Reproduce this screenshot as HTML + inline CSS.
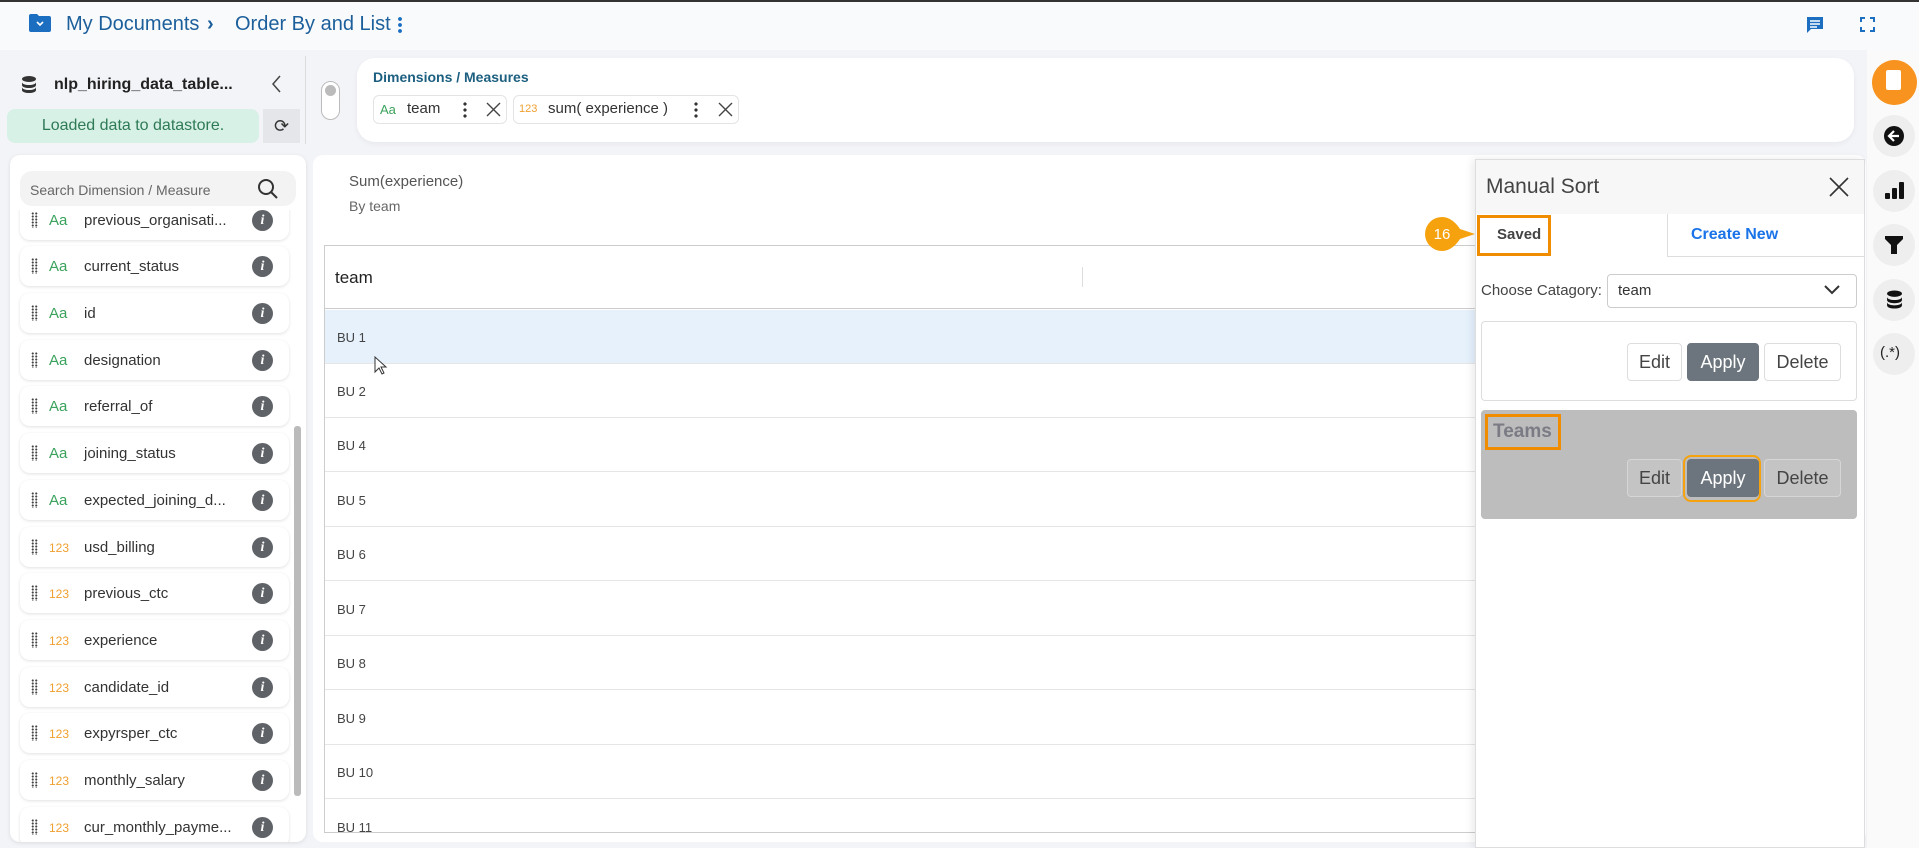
<!DOCTYPE html>
<html><head><meta charset="utf-8"><style>
*{box-sizing:border-box;margin:0;padding:0}
body{width:1919px;height:848px;overflow:hidden;background:#f3f4f8;font-family:"Liberation Sans",sans-serif;position:relative;color:#333}
.a{position:absolute}
.top{left:0;top:0;width:1919px;height:50px;background:#f9fafc;border-top:2px solid #333}
.bc{top:13px;font-size:20px;color:#1c5f9b}
.item{left:20px;width:269px;height:40px;background:#fff;border-radius:10px;box-shadow:0 1px 3px rgba(0,0,0,.12)}
.item .g{position:absolute;left:11px;top:12px;width:7px;height:16px;background:radial-gradient(circle,#444 0.9px,transparent 1.2px) 0 0/3.5px 3px}
.item .t{position:absolute;left:29px;top:12px;font-size:15px}
.item .n{position:absolute;left:64px;top:12px;font-size:15px;color:#333}
.item .i{position:absolute;left:232px;top:10px;width:21px;height:21px;border-radius:50%;background:#5f6368;color:#fff;font:italic bold 14px "Liberation Serif",serif;text-align:center;line-height:21px}
.aa{color:#3aa25c}.nn{color:#f0a030;font-size:12px!important;top:14px!important}
.row{left:325px;width:1150px;height:54px;border-bottom:1px solid #e6e6e6;font-size:13px;color:#444;padding:20px 0 0 12px}
.btn{height:38px;border:1px solid #ddd;border-radius:4px;background:#fff;font-size:18px;color:#444;text-align:center;line-height:36px}
.ap{background:#6c757d;color:#fff;border-color:#6c757d}
.sb{left:1873px;width:42px;height:42px;border-radius:50%;background:#eeeeef}
</style></head><body>
<div class="a top"></div>
<svg class="a" style="left:28px;top:13px" width="24" height="20" viewBox="0 0 24 20"><path d="M1 3a2 2 0 0 1 2-2h6l2 2h10a2 2 0 0 1 2 2v12a2 2 0 0 1-2 2H3a2 2 0 0 1-2-2z" fill="#1c6fc0"/><path d="M9 9l3 3 3-3" stroke="#fff" stroke-width="1.6" fill="none"/></svg>
<div class="a bc" style="left:66px">My Documents</div>
<div class="a bc" style="left:207px;font-weight:bold">›</div>
<div class="a bc" style="left:235px">Order By and List</div>
<div class="a" style="left:398px;top:16px;width:4px;height:18px;background:radial-gradient(circle,#1c6fc0 1.8px,transparent 2px) 0 0/4px 6px"></div>
<svg class="a" style="left:1805px;top:15px" width="20" height="20" viewBox="0 0 20 20"><path d="M2 2h16v12H6l-4 4z" fill="#1c6fc0"/><path d="M5 6h10M5 9h10M5 12h7" stroke="#fff" stroke-width="1.5"/></svg>
<svg class="a" style="left:1860px;top:17px" width="15" height="15" viewBox="0 0 15 15" fill="none" stroke="#1c6fc0" stroke-width="2"><path d="M1 5V1h4M10 1h4v4M14 10v4h-4M5 14H1v-4"/></svg>

<svg class="a" style="left:21px;top:75px" width="16" height="20" viewBox="0 0 16 20"><ellipse cx="8" cy="4" rx="7" ry="3" fill="#333"/><path d="M1 7c0 4 14 4 14 0v3c0 4-14 4-14 0zM1 12c0 4 14 4 14 0v3c0 4-14 4-14 0z" fill="#333"/></svg>
<div class="a" style="left:54px;top:76px;font-size:16px;font-weight:bold;color:#222">nlp_hiring_data_table...</div>
<svg class="a" style="left:272px;top:75px" width="10" height="18" viewBox="0 0 10 18" fill="none" stroke="#444" stroke-width="1.5"><path d="M8 1L1 9l7 8"/></svg>
<div class="a" style="left:7px;top:109px;width:252px;height:34px;background:#d7f1e6;border-radius:8px;color:#2e7a55;font-size:16px;text-align:center;line-height:34px">Loaded data to datastore.</div>
<div class="a" style="left:263px;top:109px;width:37px;height:34px;background:#e4e6ea;text-align:center;line-height:34px;font-size:18px">⟳</div>
<div class="a" style="left:305px;top:56px;width:1px;height:88px;background:#ddd"></div>
<div class="a" style="left:321px;top:81px;width:19px;height:39px;border:1px solid #bbb;border-radius:10px;background:#fff"></div>
<div class="a" style="left:325px;top:85px;width:11px;height:11px;border-radius:50%;background:#bbb"></div>
<div class="a" style="left:357px;top:58px;width:1497px;height:84px;background:#fff;border-radius:18px;box-shadow:0 2px 6px rgba(0,0,0,.05)"></div>
<div class="a" style="left:373px;top:69px;font-size:14px;font-weight:bold;color:#1c5f80">Dimensions / Measures</div>
<div class="a" style="left:373px;top:95px;width:134px;height:29px;border:1px solid #e4e4e4;border-radius:6px;background:#fff"></div>
<div class="a" style="left:380px;top:102px;font-size:13px;color:#3aa25c">Aa</div>
<div class="a" style="left:407px;top:100px;font-size:15px">team</div>
<div class="a" style="left:463px;top:101px;width:4px;height:17px;background:radial-gradient(circle,#333 1.6px,transparent 1.8px) 0 0/4px 6px"></div>
<svg class="a" style="left:486px;top:102px" width="15" height="15" viewBox="0 0 15 15" stroke="#444" stroke-width="1.4"><path d="M1 1l13 13M14 1L1 14"/></svg>
<div class="a" style="left:513px;top:95px;width:226px;height:29px;border:1px solid #e4e4e4;border-radius:6px;background:#fff"></div>
<div class="a" style="left:519px;top:103px;font-size:11px;color:#f0a030">123</div>
<div class="a" style="left:548px;top:100px;font-size:15px">sum( experience )</div>
<div class="a" style="left:694px;top:101px;width:4px;height:17px;background:radial-gradient(circle,#333 1.6px,transparent 1.8px) 0 0/4px 6px"></div>
<svg class="a" style="left:718px;top:102px" width="15" height="15" viewBox="0 0 15 15" stroke="#444" stroke-width="1.4"><path d="M1 1l13 13M14 1L1 14"/></svg>

<div class="a" style="left:10px;top:155px;width:296px;height:687px;background:#fff;border-radius:10px;box-shadow:0 1px 4px rgba(0,0,0,.1);overflow:hidden">
<div class="a" style="left:10px;top:16px;width:276px;height:35px;background:#f3f3f3;border-radius:12px"></div>
<div class="a" style="left:20px;top:27px;font-size:14px;color:#666">Search Dimension / Measure</div>
<svg class="a" style="left:247px;top:23px" width="22" height="22" viewBox="0 0 22 22" fill="none" stroke="#333" stroke-width="2"><circle cx="9" cy="9" r="7"/><path d="M14 14l6 6"/></svg>
</div>
<div class="a" style="left:10px;top:210px;width:290px;height:632px;overflow:hidden">
<div style="position:relative;left:-10px;top:-210px">
<div class="a item" style="top:200px"><div class="g"></div><div class="t aa">Aa</div><div class="n">previous_organisati...</div><div class="i">i</div></div>
<div class="a item" style="top:246px"><div class="g"></div><div class="t aa">Aa</div><div class="n">current_status</div><div class="i">i</div></div>
<div class="a item" style="top:293px"><div class="g"></div><div class="t aa">Aa</div><div class="n">id</div><div class="i">i</div></div>
<div class="a item" style="top:340px"><div class="g"></div><div class="t aa">Aa</div><div class="n">designation</div><div class="i">i</div></div>
<div class="a item" style="top:386px"><div class="g"></div><div class="t aa">Aa</div><div class="n">referral_of</div><div class="i">i</div></div>
<div class="a item" style="top:433px"><div class="g"></div><div class="t aa">Aa</div><div class="n">joining_status</div><div class="i">i</div></div>
<div class="a item" style="top:480px"><div class="g"></div><div class="t aa">Aa</div><div class="n">expected_joining_d...</div><div class="i">i</div></div>
<div class="a item" style="top:527px"><div class="g"></div><div class="t nn">123</div><div class="n">usd_billing</div><div class="i">i</div></div>
<div class="a item" style="top:573px"><div class="g"></div><div class="t nn">123</div><div class="n">previous_ctc</div><div class="i">i</div></div>
<div class="a item" style="top:620px"><div class="g"></div><div class="t nn">123</div><div class="n">experience</div><div class="i">i</div></div>
<div class="a item" style="top:667px"><div class="g"></div><div class="t nn">123</div><div class="n">candidate_id</div><div class="i">i</div></div>
<div class="a item" style="top:713px"><div class="g"></div><div class="t nn">123</div><div class="n">expyrsper_ctc</div><div class="i">i</div></div>
<div class="a item" style="top:760px"><div class="g"></div><div class="t nn">123</div><div class="n">monthly_salary</div><div class="i">i</div></div>
<div class="a item" style="top:807px"><div class="g"></div><div class="t nn">123</div><div class="n">cur_monthly_payme...</div><div class="i">i</div></div>
</div></div>
<div class="a" style="left:294px;top:426px;width:7px;height:370px;background:#bbb;border-radius:3px"></div>

<div class="a" style="left:313px;top:155px;width:1553px;height:687px;background:#fff;border-radius:10px"></div>
<div class="a" style="left:349px;top:173px;font-size:15px;color:#555">Sum(experience)</div>
<div class="a" style="left:349px;top:198px;font-size:14px;color:#666">By team</div>
<div class="a" style="left:324px;top:245px;width:1160px;height:588px;border:1px solid #ccc;border-right:none"></div>
<div class="a" style="left:325px;top:308px;width:1150px;height:1px;background:#ccc"></div>
<div class="a" style="left:335px;top:268px;font-size:17px;color:#222">team</div>
<div class="a" style="left:1082px;top:267px;width:1px;height:20px;background:#ddd"></div>
<div class="a row" style="top:310px;background:#e6f1fc">BU 1</div>
<div class="a row" style="top:364px">BU 2</div>
<div class="a row" style="top:418px">BU 4</div>
<div class="a row" style="top:473px">BU 5</div>
<div class="a row" style="top:527px">BU 6</div>
<div class="a row" style="top:582px">BU 7</div>
<div class="a row" style="top:636px">BU 8</div>
<div class="a row" style="top:691px">BU 9</div>
<div class="a row" style="top:745px">BU 10</div>
<div class="a row" style="top:800px;border:none;height:32px;overflow:hidden">BU 11</div>
<svg class="a" style="left:374px;top:356px" width="14" height="20" viewBox="0 0 14 20"><path d="M1 1v15l4-4 3 6 2-1-3-6h5z" fill="#fff" stroke="#333"/></svg>

<div class="a" style="left:1475px;top:159px;width:390px;height:689px;background:#fff;border:1px solid #ddd;box-shadow:-3px 0 8px rgba(0,0,0,.08)"></div>
<div class="a" style="left:1476px;top:160px;width:388px;height:54px;background:#f7f7f7"></div>
<div class="a" style="left:1486px;top:175px;font-size:21px;color:#444">Manual Sort</div>
<svg class="a" style="left:1829px;top:177px" width="20" height="20" viewBox="0 0 20 20" stroke="#333" stroke-width="1.6"><path d="M1 1l18 18M19 1L1 19"/></svg>
<div class="a" style="left:1667px;top:214px;width:197px;height:43px;border-left:1px solid #ddd;border-bottom:1px solid #ddd"></div>
<div class="a" style="left:1691px;top:226px;font-size:16px;font-weight:bold;color:#1a73e8">Create New</div>
<div class="a" style="left:1477px;top:215px;width:74px;height:41px;border:3px solid #f08c00"></div>
<div class="a" style="left:1497px;top:226px;font-size:15px;font-weight:bold;color:#444">Saved</div>
<svg class="a" style="left:1423px;top:216px" width="54" height="36" viewBox="0 0 54 36"><path d="M19 1a17 17 0 1 0 0 34c8 0 14-6 18-12l15-5-15-5C33 7 27 1 19 1z" fill="#f5a20e"/><text x="19" y="23" font-family="Liberation Sans" font-size="15" fill="#fff" text-anchor="middle">16</text></svg>
<div class="a" style="left:1481px;top:282px;font-size:15px;color:#444">Choose Catagory:</div>
<div class="a" style="left:1607px;top:274px;width:250px;height:34px;border:1px solid #ccc;border-radius:4px"></div>
<div class="a" style="left:1618px;top:282px;font-size:15px;color:#333">team</div>
<svg class="a" style="left:1824px;top:285px" width="16" height="10" viewBox="0 0 16 10" fill="none" stroke="#333" stroke-width="2"><path d="M1 1l7 7 7-7"/></svg>
<div class="a" style="left:1481px;top:321px;width:376px;height:80px;border:1px solid #ddd;border-radius:4px"></div>
<div class="a btn" style="left:1627px;top:343px;width:55px">Edit</div>
<div class="a btn ap" style="left:1687px;top:343px;width:72px">Apply</div>
<div class="a btn" style="left:1764px;top:343px;width:77px">Delete</div>
<div class="a" style="left:1481px;top:410px;width:376px;height:109px;background:#bdbdbd;border-radius:4px"></div>
<div class="a" style="left:1485px;top:414px;width:76px;height:36px;border:3px solid #f08c00"></div>
<div class="a" style="left:1493px;top:421px;font-size:19px;font-weight:bold;color:#7b7b85">Teams</div>
<div class="a btn" style="left:1627px;top:459px;width:55px;background:#c4c4c4;border-color:#d6d6d6">Edit</div>
<div class="a" style="left:1683px;top:455px;width:78px;height:47px;border:2px solid #f5a20e;border-radius:8px"></div>
<div class="a btn ap" style="left:1687px;top:459px;width:72px">Apply</div>
<div class="a btn" style="left:1764px;top:459px;width:77px;background:#c4c4c4;border-color:#d6d6d6">Delete</div>

<div class="a" style="left:1867px;top:50px;width:52px;height:798px;background:#fafafa"></div>
<div class="a" style="left:1872px;top:60px;width:45px;height:45px;border-radius:50%;background:#f7931e"></div>
<div class="a" style="left:1886px;top:70px;width:15px;height:20px;background:#fff;border-radius:2px"></div>
<div class="a sb" style="top:115px"></div>
<svg class="a" style="left:1883px;top:125px" width="22" height="22" viewBox="0 0 22 22"><circle cx="11" cy="11" r="10" fill="#111"/><path d="M16 11H7M11 6l-5 5 5 5" stroke="#fff" stroke-width="2.2" fill="none"/></svg>
<div class="a sb" style="top:170px"></div>
<svg class="a" style="left:1884px;top:181px" width="20" height="20" viewBox="0 0 20 20" fill="#111"><rect x="1" y="12" width="5" height="6" rx="1"/><rect x="8" y="7" width="5" height="11" rx="1"/><rect x="15" y="1" width="5" height="17" rx="1"/></svg>
<div class="a sb" style="top:224px"></div>
<svg class="a" style="left:1884px;top:235px" width="20" height="20" viewBox="0 0 20 20" fill="#111"><path d="M1 1h18v3l-6 6v9h-6v-9L1 4z"/></svg>
<div class="a sb" style="top:279px"></div>
<svg class="a" style="left:1886px;top:289px" width="17" height="22" viewBox="0 0 16 20"><ellipse cx="8" cy="4" rx="7" ry="3" fill="#111"/><path d="M1 7c0 4 14 4 14 0v3c0 4-14 4-14 0zM1 12c0 4 14 4 14 0v3c0 4-14 4-14 0z" fill="#111"/></svg>
<div class="a sb" style="top:333px"></div>
<div class="a" style="left:1880px;top:344px;font-size:15px;color:#222">(.*)</div>
</body></html>
